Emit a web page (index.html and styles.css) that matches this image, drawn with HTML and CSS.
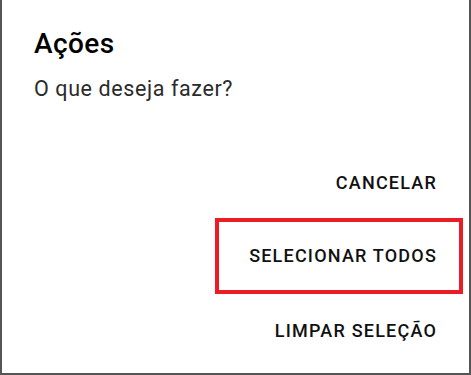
FILE: index.html
```html
<!DOCTYPE html>
<html lang="pt">
<head>
    <meta charset="UTF-8">
    <meta name="viewport" content="width=device-width, initial-scale=1.0">
    <title>Ações</title>
    <link rel="stylesheet" href="styles.css">
</head>
<body>
    <div class="dialog">
        <!-- Header -->
        <h1 class="dialog-title">Ações</h1>
        <p class="dialog-message">O que deseja fazer?</p>

        <!-- Stacked action buttons -->
        <div class="dialog-actions">
            <button class="action-btn">CANCELAR</button>
            <button class="action-btn highlighted">SELECIONAR TODOS</button>
            <button class="action-btn">LIMPAR SELEÇÃO</button>
        </div>
    </div>
</body>
</html>
```

FILE: styles.css
```css
/* Basic reset */
* {
    margin: 0;
    padding: 0;
    box-sizing: border-box;
}

body {
    font-family: Roboto, 'Noto Sans', sans-serif;
    background-color: #fff;
    width: 471px;
    height: 375px;
    overflow: hidden;
}

/* Dialog box (top edge is cut off by the screenshot) */
.dialog {
    width: 471px;
    height: 375px;
    background-color: #fff;
    border-left: 2px solid #555;
    border-right: 2px solid #555;
    border-bottom: 2px solid #555;
    padding: 28px 0 0 32px;
    display: flex;
    flex-direction: column;
}

.dialog-title {
    font-size: 28px;
    font-weight: 500;
    line-height: 32px;
    letter-spacing: 0.4px;
    color: #000;
}

.dialog-message {
    margin-top: 15px;
    font-size: 21.5px;
    line-height: 28px;
    letter-spacing: 0.6px;
    color: #2b2b2b;
}

/* Buttons */
.dialog-actions {
    margin-top: 43px;
    padding-right: 6px;
    display: flex;
    flex-direction: column;
    align-items: flex-end;
}

.action-btn {
    height: 74px;
    padding: 0 22px 0 30px;
    border: 4px solid transparent;
    background: none;
    font-family: Roboto, sans-serif;
    font-size: 18px;
    font-weight: 500;
    line-height: 66px;
    letter-spacing: 1.2px;
    color: #111;
    cursor: pointer;
}

/* Red marker around the selected option */
.action-btn.highlighted {
    height: 76px;
    margin-top: -2px;
    line-height: 68px;
    border-color: #ec1c24;
}
```
